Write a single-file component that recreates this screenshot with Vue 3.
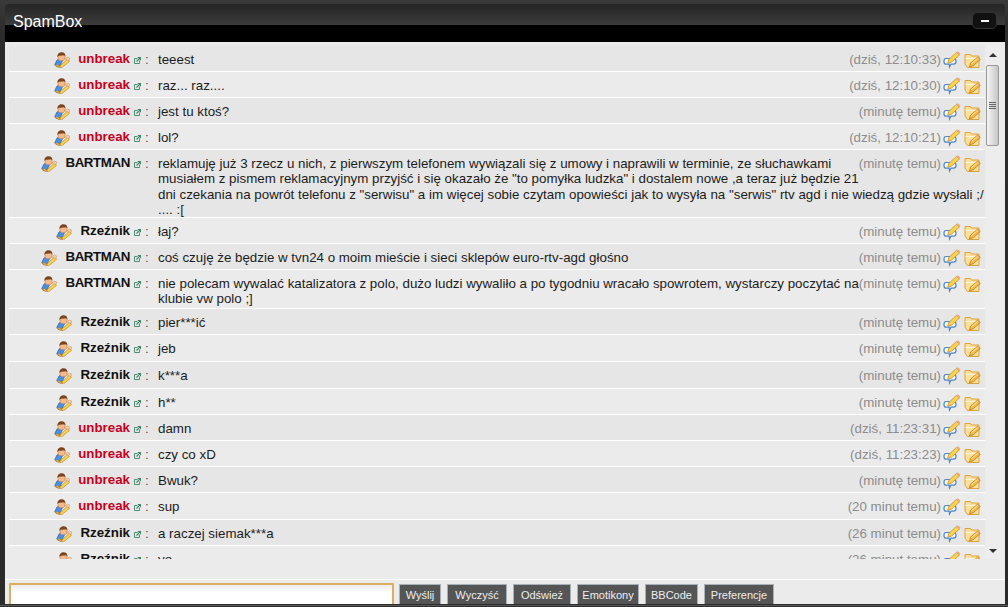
<script setup>
const msgs = [
  { u: 'unbreak', red: true, t: 'teeest', d: '(dziś, 12:10:33)', h: 26 },
  { u: 'unbreak', red: true, t: 'raz... raz....', d: '(dziś, 12:10:30)', h: 26 },
  { u: 'unbreak', red: true, t: 'jest tu ktoś?', d: '(minutę temu)', h: 26 },
  { u: 'unbreak', red: true, t: 'lol?', d: '(dziś, 12:10:21)', h: 26 },
  { u: 'BARTMAN', caps: true, t: 'reklamuję już 3 rzecz u nich, z pierwszym telefonem wywiązali się z umowy i naprawili w terminie, ze słuchawkami musiałem z pismem reklamacyjnym przyjść i się okazało że "to pomyłka ludzka" i dostalem nowe ,a teraz już będzie 21 dni czekania na powrót telefonu z "serwisu" a im więcej sobie czytam opowieści jak to wysyła na "serwis" rtv agd i nie wiedzą gdzie wysłali ;/ .... :[', d: '(minutę temu)', h: 68 },
  { u: 'Rzeźnik', t: 'łaj?', d: '(minutę temu)', h: 26 },
  { u: 'BARTMAN', caps: true, t: 'coś czuję że będzie w tvn24 o moim mieście i sieci sklepów euro-rtv-agd głośno', d: '(minutę temu)', h: 26 },
  { u: 'BARTMAN', caps: true, t: 'nie polecam wywalać katalizatora z polo, dużo ludzi wywaliło a po tygodniu wracało spowrotem, wystarczy poczytać na klubie vw polo ;]', d: '(minutę temu)', h: 39 },
  { u: 'Rzeźnik', t: 'pier***ić', d: '(minutę temu)', h: 26 },
  { u: 'Rzeźnik', t: 'jeb', d: '(minutę temu)', h: 27 },
  { u: 'Rzeźnik', t: 'k***a', d: '(minutę temu)', h: 27 },
  { u: 'Rzeźnik', t: 'h**', d: '(minutę temu)', h: 26 },
  { u: 'unbreak', red: true, t: 'damn', d: '(dziś, 11:23:31)', h: 26 },
  { u: 'unbreak', red: true, t: 'czy co xD', d: '(dziś, 11:23:23)', h: 26 },
  { u: 'unbreak', red: true, t: 'Bwuk?', d: '(minutę temu)', h: 26 },
  { u: 'unbreak', red: true, t: 'sup', d: '(20 minut temu)', h: 27 },
  { u: 'Rzeźnik', t: 'a raczej siemak***a', d: '(26 minut temu)', h: 26 },
  { u: 'Rzeźnik', t: 'yo', d: '(26 minut temu)', h: 26 },
]
const buttons = [
  { t: 'Wyślij', w: 42 },
  { t: 'Wyczyść', w: 60 },
  { t: 'Odśwież', w: 58 },
  { t: 'Emotikony', w: 62 },
  { t: 'BBCode', w: 53 },
  { t: 'Preferencje', w: 70 },
]
</script>

<template>
  <div class="page">
    <div class="panel">
      <header class="head">
        <span class="title">SpamBox</span>
        <button class="collapse"><i></i></button>
      </header>
      <div class="band"></div>
      <div class="body">
        <div class="chat">
          <div class="list">
            <div v-for="(m, i) in msgs" :key="i" class="row" :class="{ odd: i % 2 === 0 }" :style="{ height: m.h + 'px' }">
              <div class="who">
                <svg class="avatar" viewBox="0 0 16 16">
                  <path d="M.8 12.500l2.200-4.500 3-1.200 3 1-3.500 7-3.500-.5z" fill="#4a8fe0" stroke="#2d5f9f" stroke-width=".7"/>
                  <path d="M.8 13.200l3.700 2.500 2.500-.2-3.500-3z" fill="#dfa54c" stroke="#a9742a" stroke-width=".4"/>
                  <path d="M4 3h7v3.200c0 1.600-1.400 2.600-3.500 2.600S4 7.800 4 6.200z" fill="#f4b98c" stroke="#b9764a" stroke-width=".5"/>
                  <path d="M3.500 5C3.200 1.700 5.200.2 7.600.2s4 1.400 3.800 4.300l-1.200-1.200-5.400.4z" fill="#7b4420"/>
                  <path d="M5.600 14.300l7.800-7 2 2.200-7.800 6.300z" fill="#f9d24e" stroke="#bd8a2a" stroke-width=".7"/>
                  <path d="M10.600 6.800l3-1.800 2.200 1.200-.8 2.500z" fill="#f3cda4" stroke="#c48e55" stroke-width=".5"/>
                </svg>
                <span class="nick" :class="{ red: m.red, caps: m.caps }">{{ m.u }}</span>
                <svg class="ext" viewBox="0 0 7 7">
                  <path d="M.5 1.500h3M.5 1.500v5h5v-3" fill="none" stroke="#4d8f72" stroke-width="1"/>
                  <path d="M2.500 4.500L6 1M3.800.5h2.700v2.700" fill="none" stroke="#3f8566" stroke-width="1.100"/>
                </svg>
                <span class="colon">:</span>
              </div>
              <div class="content">
                <div class="meta">
                  <span class="date">{{ m.d }}</span>
                  <svg class="act" viewBox="0 0 18 18">
                    <path d="M3 7.500h7.500c1.500 0 2.500 1 2.500 2.500v.8c0 1.400-1 2.400-2.500 2.400H8l-1.500 2.800-.3-2.800H3c-1.300 0-2-.9-2-2.400V10c0-1.500.7-2.500 2-2.500z" fill="#f1f5fb" stroke="#4f86c6" stroke-width="1.200"/>
                    <path d="M4.800 12.200l1-3.800 7.700-7 3 2.600-7.800 7z" fill="#f9d24e" stroke="#c39230" stroke-width=".8"/>
                    <path d="M13.500 1.400l3 2.600 1-1.500-2.800-2.200z" fill="#f0a686"/>
                  </svg>
                  <svg class="act folder" viewBox="0 0 18 18">
                    <path d="M1 1.500h5.500l1 1.500h7.500v11.500H3.500L1 11z" fill="#fbdf9a" stroke="#dba341" stroke-width="1"/>
                    <path d="M1.500 5.500h13" stroke="#fff5d8" stroke-width="1"/>
                    <path d="M5.500 14l1-3.800 7-6 2.800 2.300-7 6.200z" fill="#f4bc47" stroke="#b67d22" stroke-width=".8"/>
                    <path d="M7.500 10.500l6-5" stroke="#fbe7a8" stroke-width="1"/>
                  </svg>
                </div>
                {{ m.t }}
              </div>
            </div>
          </div>
          <div class="scrollbar">
            <div class="arrow up"></div>
            <div class="track">
              <div class="thumb"><i></i><i></i><i></i><i></i></div>
            </div>
            <div class="arrow down"></div>
          </div>
        </div>
        <div class="foot">
          <input class="input" />
          <div class="buttons">
            <button v-for="b in buttons" :key="b.t" class="btn" :style="{ width: b.w + 'px' }">{{ b.t }}</button>
          </div>
        </div>
      </div>
    </div>
    <div class="baseline"></div>
  </div>
</template>

<style>
html, body { margin: 0; overflow: hidden; background: #2b2b2b; }
</style>

<style scoped>
.page { width: 1008px; height: 607px; box-sizing: border-box; padding: 4px 3px 0 5px; background: linear-gradient(#3a3a3a, #2c2c2c 30px, #2b2b2b); font-family: "Liberation Sans", Arial, sans-serif; overflow: hidden; }
.panel { height: 600px; display: flex; flex-direction: column; border-radius: 4px 4px 0 0; overflow: hidden; }
.head { height: 21px; flex: none; display: flex; justify-content: space-between; align-items: flex-start; background: linear-gradient(#252525, #3c3c3c); }
.title { margin: 8px 0 0 8px; color: #fff; font-size: 16px; line-height: 20px; position: relative; z-index: 1; }
.collapse { margin: 8px 8px 0 0; width: 25px; height: 17px; padding: 0; border: 1px solid #333; border-radius: 5px; background: #111; display: flex; align-items: center; justify-content: center; position: relative; z-index: 1; }
.collapse i { width: 8px; height: 2px; background: #fff; }
.band { height: 17px; flex: none; background: #000; }
.body { flex: 1; background: #ebebeb; display: flex; flex-direction: column; min-height: 0; }
.chat { height: 537px; flex: none; padding: 4px 5px 0 4px; box-sizing: border-box; display: flex; }
.list { width: 976px; height: 513px; overflow: hidden; flex: none; }
.row { display: flex; align-items: flex-start; box-sizing: border-box; border-bottom: 1px solid #fff; padding-top: 6px; font-size: 13.33px; line-height: 15.33px; color: #1c1c1c; }
.row.odd { background: #e6e6e6; }
.who { width: 143px; flex: none; display: flex; justify-content: flex-end; align-items: flex-start; }
.avatar { width: 16px; height: 16px; margin: 0 8px 0 0; flex: none; }
.nick { font-weight: 700; color: #111; line-height: 14px; }
.nick.red { color: #c8001e; }
.nick.caps { letter-spacing: -.4px; }
.ext { width: 7px; height: 7px; margin: 5px 0 0 4px; flex: none; }
.colon { margin: 0 0 0 4px; width: 7px; color: #555; }
.content { flex: 1; min-width: 0; margin-left: 6px; }
.meta { float: right; height: 30px; display: flex; align-items: flex-start; margin: 0 3px 0 -6px; }
.date { color: #8c8c8c; white-space: nowrap; }
.act { width: 18px; height: 18px; flex: none; margin: -1px 0 0 2px; }
.folder { margin: 1px 0 0 3px; }
.scrollbar { width: 15px; margin-left: 0; display: flex; flex-direction: column; height: 513px; background: #ededed; }
.arrow { height: 17px; flex: none; display: flex; align-items: center; justify-content: center; }
.arrow::before { content: ""; border: 4px solid transparent; }
.arrow.up::before { border-bottom: 4px solid #333; border-top: 0; }
.arrow.down::before { border-top: 4px solid #333; border-bottom: 0; }
.track { flex: 1; padding: 2px 1px 0; }
.thumb { height: 81px; box-sizing: border-box; border: 1px solid #999; border-radius: 2px; background: linear-gradient(90deg, #f4f4f4, #c6c6c6); display: flex; flex-direction: column; gap: 1px; align-items: center; justify-content: center; }
.thumb i { width: 7px; height: 1px; background: #666; }
.foot { flex: 1; border-top: 1px solid #fff; display: flex; align-items: flex-start; padding: 3px 0 0 4px; min-height: 0; overflow: hidden; }
.input { width: 385px; height: 30px; box-sizing: border-box; border: 2px solid #dcae62; border-radius: 1px; background: linear-gradient(#ececec, #fff 8px); padding: 0; margin: 0; flex: none; }
.buttons { display: flex; gap: 6px; margin: 1px 0 0 5px; }
.btn { height: 20px; padding: 0; box-sizing: border-box; border: 0; border-top: 1px solid #a8b0b8; border-left: 1px solid #a8b0b8; border-right: 1px solid #a8b0b8; background: #555; color: #eee; font: 11px/16px "Liberation Sans", Arial, sans-serif; display: block; text-align: center; }
.baseline { height: 1px; margin: 1px -3px 0 -5px; background: #5a5a5a; }
</style>
